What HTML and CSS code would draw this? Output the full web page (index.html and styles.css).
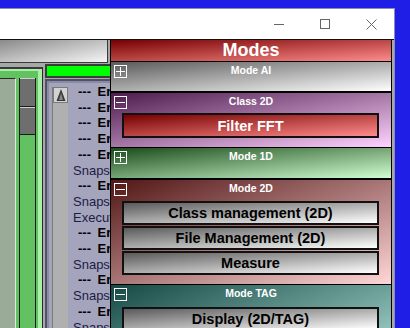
FILE: index.html
```html
<!DOCTYPE html>
<html lang="en">

<head>
    <meta charset="UTF-8">
    <title>Modes</title>
    <link rel="stylesheet" href="styles.css">
</head>

<body>
    <div class="window">
        <div class="titlebar">
            <div class="tb-btn">
                <svg width="10" height="10" viewBox="0 0 10 10"><path d="M0 5.5h10" stroke="#666" stroke-width="1" /></svg>
            </div>
            <div class="tb-btn">
                <svg width="10" height="10" viewBox="0 0 10 10"><rect x="0.5" y="0.5" width="9" height="9" fill="none" stroke="#666" stroke-width="1" /></svg>
            </div>
            <div class="tb-btn">
                <svg width="11" height="11" viewBox="0 0 11 11"><path d="M0.5 0.5l10 10M10.5 0.5l-10 10" stroke="#666" stroke-width="1" /></svg>
            </div>
        </div>

        <div class="client">
            <div class="left">
                <div class="toolbar"></div>
                <div class="left-body">
                    <div class="green-pane">
                        <div class="gp-fill"></div>
                        <div class="gp-scroll">
                            <div class="thumb t1"></div>
                            <div class="thumb t2"></div>
                        </div>
                    </div>
                    <div class="right-col">
                        <div class="progress"></div>
                        <div class="log">
                            <div class="log-scroll">
                                <div class="up-btn">
                                    <svg width="10" height="14" viewBox="0 0 10 14">
                                        <polygon points="5,1 9.5,13 0.5,13" fill="#3a3a3a" />
                                        <polygon points="5,5 7,12 3,12" fill="#8a8a8a" />
                                    </svg>
                                </div>
                            </div>
                            <div class="log-lines">
                                <div class="err">--- Error ---</div>
                                <div class="err">--- Error ---</div>
                                <div class="err">--- Error ---</div>
                                <div class="err">--- Error ---</div>
                                <div class="err">--- Error ---</div>
                                <div>Snapshot</div>
                                <div class="err">--- Error ---</div>
                                <div>Snapshot</div>
                                <div>Execution</div>
                                <div class="err">--- Error ---</div>
                                <div class="err">--- Error ---</div>
                                <div>Snapshot</div>
                                <div class="err">--- Error ---</div>
                                <div>Snapshot</div>
                                <div class="err">--- Error ---</div>
                                <div>Snapshot</div>
                            </div>
                        </div>
                    </div>
                </div>
            </div>

            <div class="modes">
                <div class="modes-head">Modes</div>

                <div class="section sec-ai">
                    <div class="sec-row">
                        <svg class="tog" width="13" height="13" viewBox="0 0 13 13"><rect x="0.5" y="0.5" width="12" height="12" fill="none" stroke="#fff" /><path d="M2 6.5h9M6.5 2v9" stroke="#fff" /></svg>
                        <div class="sec-title">Mode AI</div>
                    </div>
                </div>

                <div class="section sec-class">
                    <div class="sec-row">
                        <svg class="tog" width="13" height="13" viewBox="0 0 13 13"><rect x="0.5" y="0.5" width="12" height="12" fill="none" stroke="#fff" /><path d="M2 6.5h9" stroke="#fff" /></svg>
                        <div class="sec-title">Class 2D</div>
                    </div>
                    <div class="btn btn-red">Filter FFT</div>
                </div>

                <div class="section sec-1d">
                    <div class="sec-row">
                        <svg class="tog" width="13" height="13" viewBox="0 0 13 13"><rect x="0.5" y="0.5" width="12" height="12" fill="none" stroke="#fff" /><path d="M2 6.5h9M6.5 2v9" stroke="#fff" /></svg>
                        <div class="sec-title">Mode 1D</div>
                    </div>
                </div>

                <div class="section sec-2d">
                    <div class="sec-row">
                        <svg class="tog" width="13" height="13" viewBox="0 0 13 13"><rect x="0.5" y="0.5" width="12" height="12" fill="none" stroke="#fff" /><path d="M2 6.5h9" stroke="#fff" /></svg>
                        <div class="sec-title">Mode 2D</div>
                    </div>
                    <div class="btn-list">
                        <div class="btn">Class management (2D)</div>
                        <div class="btn">File Management (2D)</div>
                        <div class="btn">Measure</div>
                    </div>
                </div>

                <div class="section sec-tag">
                    <div class="sec-row">
                        <svg class="tog" width="13" height="13" viewBox="0 0 13 13"><rect x="0.5" y="0.5" width="12" height="12" fill="none" stroke="#fff" /><path d="M2 6.5h9" stroke="#fff" /></svg>
                        <div class="sec-title">Mode TAG</div>
                    </div>
                    <div class="btn-list">
                        <div class="btn">Display (2D/TAG)</div>
                    </div>
                </div>
            </div>
        </div>
    </div>
</body>

</html>
```

FILE: styles.css
```css
* {
    box-sizing: border-box;
}

body {
    margin: 0;
    height: 328px;
    overflow: hidden;
    background: #1e1ee6;
    font-family: "Liberation Sans", Arial, sans-serif;
}

.window {
    margin-top: 8px;
    width: 395px;
    height: 320px;
    display: flex;
    flex-direction: column;
    background: #fff;
    border-top: 1px solid #8c8cb4;
    border-right: 1px solid #8c8cb4;
}

/* window caption */
.titlebar {
    flex: none;
    height: 30px;
    display: flex;
    justify-content: flex-end;
}

.tb-btn {
    width: 46px;
    display: flex;
    align-items: center;
    justify-content: center;
}

.client {
    flex: 1;
    display: flex;
    overflow: hidden;
    background: #a8a8a8;
    border-top: 1px solid #111;
}

/* left side (behind the modes panel) */
.left {
    flex: none;
    width: 110px;
    display: flex;
    flex-direction: column;
    overflow: hidden;
}

.toolbar {
    flex: none;
    width: 108px;
    height: 23px;
    background: linear-gradient(to bottom right, #8a8a8a, #f6f6f6);
    border-right: 1px solid #3a3a3a;
    border-bottom: 1px solid #3a3a3a;
}

.left-body {
    flex: 1;
    display: flex;
    gap: 2px;
    padding-top: 1px;
}

.green-pane {
    flex: none;
    width: 43px;
    margin-top: 3px;
    display: flex;
    gap: 3px;
    padding: 9px 6px 0 0;
    background: #62c262;
    border-top: 2px solid #3a3a3a;
    border-right: 1px solid #2a2a2a;
    box-shadow: inset -4px 0 0 #a8f0a8, inset 0 2px 0 #a8f0a8;
}

.gp-fill {
    width: 17px;
    background: #9aab97;
    border-top: 1px solid #2a2a2a;
    border-right: 1px solid #dfe9dc;
}

.gp-scroll {
    width: 17px;
    display: flex;
    flex-direction: column;
    background: #62c262;
    border-left: 1px solid #1a1a1a;
    border-right: 1px solid #1a1a1a;
}

.thumb {
    background: #6e6e6e;
    border-top: 1px solid #cfcfcf;
    border-bottom: 1px solid #1a1a1a;
}

.t1 {
    height: 29px;
}

.t2 {
    height: 28px;
}

.right-col {
    flex: 1;
    min-width: 0;
    display: flex;
    flex-direction: column;
}

.progress {
    flex: none;
    height: 14px;
    background: #00ff00;
    border: 2px solid #3c3c3c;
    border-right: none;
}

.log {
    flex: 1;
    min-height: 0;
    display: flex;
    overflow: hidden;
    margin-top: 1px;
    padding: 6px 0 0 5px;
    background: #a4a4bc;
    border: 2px solid #50506a;
    border-right: none;
    box-shadow: inset 2px 2px 0 #8a8aa2;
}

.log-scroll {
    flex: none;
    width: 16px;
    background: #b0b0b0;
    border-left: 1px solid #7a7a7a;
}

.up-btn {
    height: 16px;
    display: flex;
    align-items: center;
    justify-content: center;
    background: #d2d2d2;
    border: 1px solid #7a7a7a;
}

.log-lines {
    flex: 1;
    min-width: 0;
    overflow: hidden;
    margin-top: -3px;
    padding-left: 5px;
    white-space: nowrap;
    font-size: 13px;
    line-height: 15.7px;
    color: #1c1c44;
}

.err {
    padding-left: 5px;
    font-weight: bold;
    color: #000;
    word-spacing: 3px;
}

/* modes panel */
.modes {
    flex: none;
    width: 282px;
    display: flex;
    flex-direction: column;
    overflow: hidden;
    padding: 0 1px;
    background: #000;
}

.modes-head {
    flex: none;
    height: 21px;
    line-height: 21px;
    text-align: center;
    font-size: 18px;
    font-weight: bold;
    color: #fff;
    background: linear-gradient(to bottom right, #760000, #ff8c8c);
}

.section {
    flex: none;
    padding-top: 3px;
}

.sec-row {
    display: grid;
    grid-template-columns: 13px 1fr 13px;
    padding: 0 3px;
}

.tog {
    display: block;
}

.sec-title {
    margin-top: -1px;
    line-height: 12px;
    text-align: center;
    font-size: 10.5px;
    font-weight: bold;
    color: #fff;
}

.sec-ai {
    margin-top: 1px;
    height: 29px;
    background: linear-gradient(to bottom right, #5a5a5a, #ffffff);
}

.sec-class {
    margin-top: 2px;
    height: 54px;
    background: linear-gradient(to bottom right, #4c1c4c, #ffd2ff);
}

.sec-1d {
    margin-top: 1px;
    height: 30px;
    background: linear-gradient(to bottom right, #1a4a1a, #d2ffd2);
}

.sec-2d {
    margin-top: 2px;
    height: 104px;
    background: linear-gradient(to bottom right, #521616, #ffd6d6);
}

.sec-tag {
    margin-top: 1px;
    height: 110px;
    background: linear-gradient(to bottom right, #164844, #c4f6ee);
}

.btn-list {
    display: flex;
    flex-direction: column;
    gap: 1px;
    margin-top: 5px;
}

.sec-tag .btn-list {
    margin-top: 6px;
}

.btn {
    height: 24px;
    margin: 0 12px 0 11px;
    display: flex;
    align-items: center;
    justify-content: center;
    font-size: 14.5px;
    font-weight: bold;
    color: #000;
    background: linear-gradient(to bottom right, #5a5a5a, #ffffff);
    border: 2px solid #111;
}

.btn-red {
    height: 25px;
    margin-top: 4px;
    color: #fff;
    background: linear-gradient(to bottom right, #760000, #ff8c8c);
}
```
